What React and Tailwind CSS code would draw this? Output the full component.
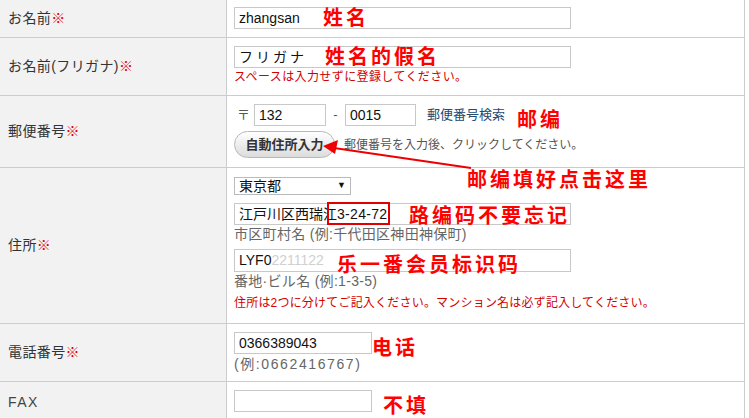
import React from "react";

const jp = { fontFamily: '"Liberation Sans", "Noto Sans CJK JP", sans-serif' };
const note = { fontFamily: '"Noto Sans CJK SC", sans-serif' };

function Label({ children, req = true }) {
  return (
    <div className="w-[227px] shrink-0 bg-[#f2f2f2] border-r border-[#cccccc] flex items-center pl-[8px] text-[14px] text-[#333333] tracking-[0.4px]">
      <span>{children}</span>
      {req && <span className="text-[#e00000] text-[14px]">※</span>}
    </div>
  );
}

function Box({ w, h = 22, children, className = "" }) {
  return (
    <div
      className={`border border-[#c8c8c8] bg-white flex items-center pl-[4px] text-[14px] text-[#111111] ${className}`}
      style={{ width: w, height: h }}
    >
      {children}
    </div>
  );
}

function Note({ x, y, children }) {
  return (
    <div
      className="absolute text-[20px] leading-[20px] font-bold tracking-[3px] text-[#ff0000] whitespace-nowrap"
      style={{ ...note, left: x, top: y }}
    >
      {children}
    </div>
  );
}

export default function App() {
  return (
    <div className="relative w-[749px] h-[418px] overflow-hidden bg-white" style={jp}>
      <div className="w-[745px] border-r border-[#cccccc]">
        {/* Row 1 */}
        <div className="flex h-[38px] border-b border-[#cccccc]">
          <Label>お名前</Label>
          <div className="flex-1 pl-[7px] pt-[7px]">
            <Box w={337}>zhangsan</Box>
          </div>
        </div>
        {/* Row 2 */}
        <div className="flex h-[58px] border-b border-[#cccccc]">
          <Label>お名前(フリガナ)</Label>
          <div className="flex-1 pl-[7px] pt-[8px]">
            <Box w={337} className="text-[11px] tracking-[3px]">フリガナ</Box>
            <div className="mt-[2px] text-[12px] leading-[15px] tracking-[0.4px] text-[#d40000]">
              スペースは入力せずに登録してください。
            </div>
          </div>
        </div>
        {/* Row 3 */}
        <div className="flex h-[72px] border-b border-[#cccccc]">
          <Label>郵便番号</Label>
          <div className="flex-1 pl-[7px] pt-[8px]">
            <div className="flex items-center h-[22px]">
              <span className="w-[20px] pl-[3px] text-[13px] text-[#555555]">〒</span>
              <Box w={72}>132</Box>
              <span className="w-[19px] text-center text-[13px] text-[#555555]">-</span>
              <Box w={71}>0015</Box>
              <span className="ml-[11px] text-[13px] text-[#244a70]">郵便番号検索</span>
            </div>
            <div className="flex items-center mt-[5px]">
              <div className="w-[101px] h-[27px] rounded-full border border-[#b8b8b8] bg-gradient-to-b from-[#ffffff] to-[#dcdcdc] flex items-center justify-center text-[13px] font-bold text-[#333333]">
                自動住所入力
              </div>
              <span className="ml-[9px] text-[12px] text-[#555555]">
                郵便番号を入力後、クリックしてください。
              </span>
            </div>
          </div>
        </div>
        {/* Row 4 */}
        <div className="flex h-[156px] border-b border-[#cccccc]">
          <Label>住所</Label>
          <div className="flex-1 pl-[7px] pt-[9px]">
            <div className="w-[117px] h-[18px] border border-[#bbbbbb] bg-white flex items-center justify-between pl-[4px] pr-[4px] text-[14px] text-[#111111]">
              <span>東京都</span>
              <span className="text-[9px]">▼</span>
            </div>
            <Box w={337} className="mt-[8px] text-[13px]">
              江戸川区西瑞江<span className="text-[14px] tracking-[0.3px]">3-24-72</span>
            </Box>
            <div className="text-[14px] leading-[18px] text-[#666666] tracking-[0.3px]">
              市区町村名 (例:千代田区神田神保町)
            </div>
            <Box w={337} h={23} className="mt-[6px] text-[13px]">
              LYF0<span className="text-[#d0d0d0]">2211122</span>
            </Box>
            <div className="text-[14px] leading-[18px] text-[#666666] tracking-[0.3px]">
              番地·ビル名 (例:1-3-5)
            </div>
            <div className="mt-[4px] text-[12px] leading-[18px] tracking-[0.2px] text-[#d40000]">
              住所は2つに分けてご記入ください。マンション名は必ず記入してください。
            </div>
          </div>
        </div>
        {/* Row 5 */}
        <div className="flex h-[58px] border-b border-[#cccccc]">
          <Label>電話番号</Label>
          <div className="flex-1 pl-[7px] pt-[8px]">
            <Box w={138}>0366389043</Box>
            <div className="text-[14px] leading-[18px] text-[#666666] tracking-[1.6px] mt-[1px]">
              (例:0662416767)
            </div>
          </div>
        </div>
        {/* Row 6 */}
        <div className="flex h-[40px]">
          <Label req={false}>
            <span className="tracking-[1.5px] text-[#444444]">FAX</span>
          </Label>
          <div className="flex-1 pl-[7px] pt-[8px]">
            <Box w={138}></Box>
          </div>
        </div>
      </div>

      {/* Red highlight box */}
      <div className="absolute left-[327px] top-[202px] w-[63px] h-[23px] border-2 border-[#e00000]"></div>

      {/* Arrow */}
      <svg className="absolute left-0 top-0" width="749" height="418" viewBox="0 0 749 418">
        <line x1="471" y1="168" x2="334" y2="148" stroke="#ee0000" strokeWidth="2" />
        <polygon points="323,146 338,140 335,154" fill="#ee0000" />
      </svg>

      {/* Annotations */}
      <Note x={323} y={7}>姓名</Note>
      <Note x={325} y={46}>姓名的假名</Note>
      <Note x={517} y={109}>邮编</Note>
      <Note x={467} y={169}>邮编填好点击这里</Note>
      <Note x={409} y={205}>路编码不要忘记</Note>
      <Note x={337} y={254}>乐一番会员标识码</Note>
      <Note x={372} y={337}>电话</Note>
      <Note x={383} y={395}>不填</Note>
    </div>
  );
}
